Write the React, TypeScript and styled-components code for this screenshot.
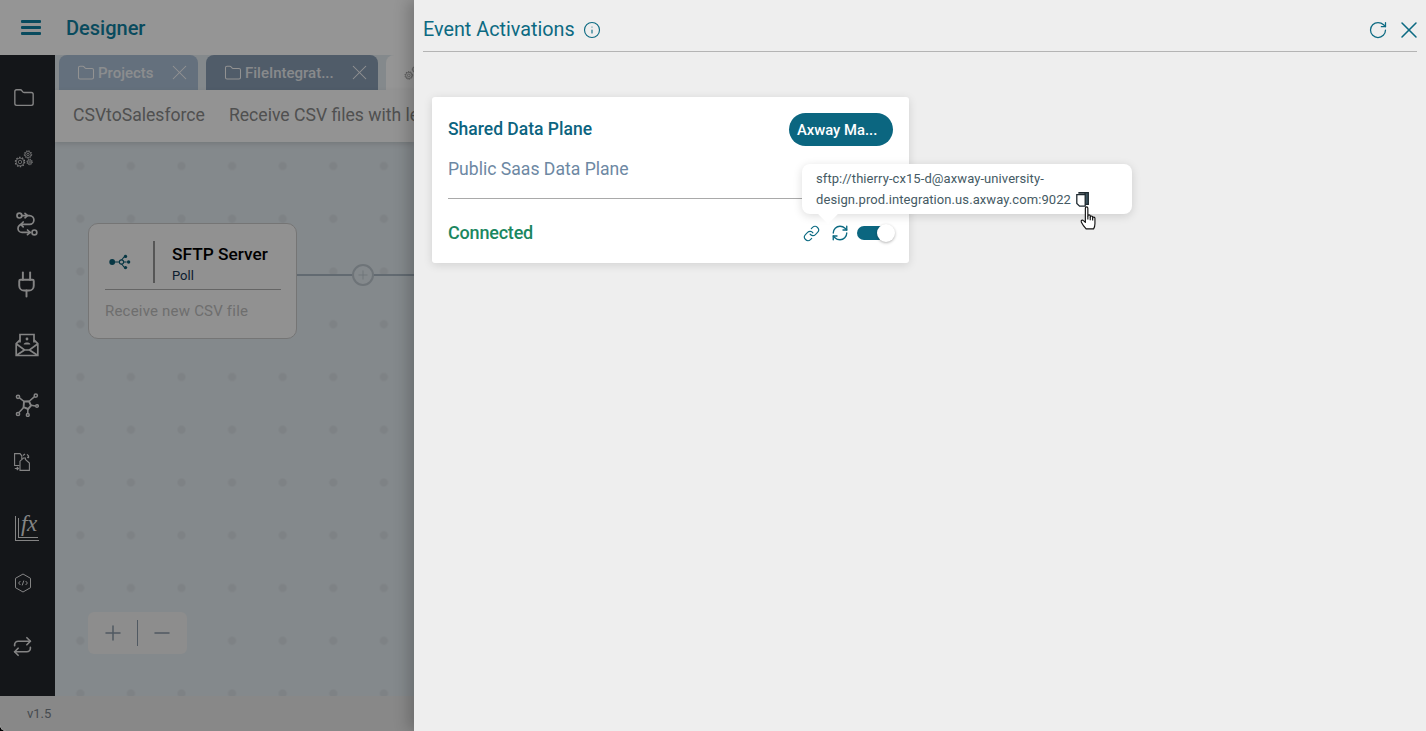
import React from "react";
import styled, { createGlobalStyle } from "styled-components";
import { Folder, Info, Link, Minus, Plug, Plus, RefreshCw, Repeat, RotateCw, X } from "lucide-react";

const Global = createGlobalStyle`
    html, body {
        margin: 0;
        height: 100%;
        overflow: hidden;
        background: #000;
    }
    body {
        font-family: Roboto, "Liberation Sans", sans-serif;
    }
    * {
        box-sizing: border-box;
    }
`;

const Shell = styled.div`
    display: flex;
    width: 1426px;
    height: 731px;
    overflow: hidden;
    border-bottom-left-radius: 6px;
`;

/* left: the designer, dimmed by the scrim */
const Designer = styled.div`
    position: relative;
    flex: 1;
    min-width: 0;
    display: flex;
    flex-direction: column;
    overflow: hidden;
    background: #f8f8f8;
`;
const Scrim = styled.div`
    position: absolute;
    inset: 0;
    background: rgba(0, 0, 0, 0.4);
    z-index: 5;
`;
const TopBar = styled.header`
    height: 55px;
    flex-shrink: 0;
    display: flex;
    align-items: center;
    padding-left: 21px;
    background: #f8f8f8;
`;
const Burger = styled.div`
    width: 20px;
    display: flex;
    flex-direction: column;
    gap: 3.5px;
    margin-right: 25px;
    span {
        height: 2.5px;
        background: #107d9d;
        border-radius: 1px;
    }
`;
const Brand = styled.div`
    font-size: 20px;
    font-weight: 500;
    color: #107d9d;
`;
const Middle = styled.div`
    flex: 1;
    min-height: 0;
    display: flex;
`;
const SideNav = styled.nav`
    width: 55px;
    flex-shrink: 0;
    background: #22252b;
    padding-top: 28px;
    color: #dddddd;
`;
const NavItem = styled.div<{ $gap: number; $left: number }>`
    height: 30px;
    margin-top: ${(p) => p.$gap}px;
    padding-left: ${(p) => p.$left}px;
    display: flex;
    align-items: center;
`;
const Work = styled.div`
    flex: 1;
    min-width: 0;
    display: flex;
    flex-direction: column;
    position: relative;
`;
const TabRow = styled.div`
    height: 35px;
    flex-shrink: 0;
    display: flex;
    gap: 8px;
    padding-left: 4px;
    background: #dce4e9;
`;
const Tab = styled.div<{ $w: number; $bg: string }>`
    width: ${(p) => p.$w}px;
    flex-shrink: 0;
    display: flex;
    align-items: center;
    padding: 0 6px 0 18px;
    border-radius: 8px 8px 0 0;
    background: ${(p) => p.$bg};
    color: #f4f4f4;
    font-size: 15px;
    font-weight: 500;
    white-space: nowrap;
    span {
        flex: 1;
        margin-left: 3px;
        opacity: 0.85;
    }
`;
const TabGear = styled.div`
    color: #777;
    line-height: 0;
`;
const SubBar = styled.div`
    height: 52px;
    flex-shrink: 0;
    display: flex;
    align-items: center;
    gap: 24px;
    padding: 0 0 2px 18px;
    background: #f6f6f6;
    color: #858585;
    font-size: 17.6px;
    white-space: nowrap;
    box-shadow: 0 2px 5px rgba(0, 0, 0, 0.12);
    position: relative;
    z-index: 1;
`;
const Canvas = styled.div`
    flex: 1;
    position: relative;
    background-color: #dce4e9;
    background-image: radial-gradient(circle, #d2d9de 3.2px, transparent 4.8px);
    background-size: 50.6px 52.75px;
    background-position: 0 -2.4px;
`;
const Node = styled.div`
    position: absolute;
    left: 33px;
    top: 81px;
    width: 209px;
    height: 116px;
    padding: 17px 15px 0 16px;
    background: #f2f2f2;
    border: 1px solid #c4c4c4;
    border-radius: 10px;
`;
const NodeHead = styled.div`
    display: flex;
    align-items: center;
    height: 49px;
    padding-bottom: 6px;
    border-bottom: 1px solid #a8a8a8;
`;
const NodeIcon = styled.div`
    width: 50px;
    padding-left: 4px;
    display: flex;
    align-items: center;
    height: 42px;
    border-right: 2px solid #8f8f8f;
`;
const NodeText = styled.div`
    margin-left: 17px;
    padding-top: 5px;
    display: flex;
    flex-direction: column;
`;
const NodeTitle = styled.div`
    font-size: 17.3px;
    font-weight: 500;
    line-height: 21px;
    color: #000;
`;
const NodeSub = styled.div`
    font-size: 13px;
    line-height: 21px;
    color: #16324f;
`;
const NodeNote = styled.div`
    margin-top: 12px;
    font-size: 15px;
    letter-spacing: 0.2px;
    color: #b8b8b8;
`;
const Wire = styled.div`
    position: absolute;
    left: 242px;
    top: 132px;
    width: 130px;
    height: 2px;
    background: #a3b1bd;
`;
const WireAdd = styled.div`
    position: absolute;
    left: 297px;
    top: 122px;
    width: 22px;
    height: 22px;
    border-radius: 50%;
    border: 2px solid #b7c1c9;
    background: #dce4e9;
    color: #b7c1c9;
    display: flex;
    align-items: center;
    justify-content: center;
`;
const Zoomer = styled.div`
    position: absolute;
    left: 33px;
    top: 470px;
    width: 99px;
    height: 42px;
    display: flex;
    align-items: center;
    justify-content: center;
    gap: 12px;
    border-radius: 6px;
    background: #ebebeb;
    color: #8594a3;
    i {
        width: 1px;
        height: 26px;
        background: #8594a3;
    }
`;
const Footer = styled.footer`
    height: 35px;
    flex-shrink: 0;
    padding: 10px 0 0 27px;
    font-size: 13px;
    line-height: 16px;
    color: #757d85;
    background: #e3e3e3;
`;

/* right: the drawer */
const Drawer = styled.aside`
    width: 1012px;
    flex-shrink: 0;
    position: relative;
    z-index: 10;
    background: #eeeeee;
    box-shadow: -6px 0 14px rgba(0, 0, 0, 0.2);
    padding: 0 9px;
`;
const DrawerHead = styled.div`
    height: 52px;
    display: flex;
    align-items: center;
    padding-top: 9px;
    border-bottom: 1px solid #b4b4b4;
    color: #0c6a82;
`;
const DrawerTitle = styled.h1`
    margin: 0 8px 0 0;
    font-size: 19.8px;
    font-weight: 400;
    line-height: 24px;
`;
const HeadActions = styled.div`
    margin-left: auto;
    margin-right: -6px;
    display: flex;
    align-items: center;
    gap: 7px;
    color: #0c6a82;
`;
const Card = styled.section`
    position: relative;
    width: 477px;
    height: 166px;
    margin: 45px 0 0 9px;
    padding: 16px;
    background: #fff;
    border-radius: 3px;
    box-shadow: 0 2px 10px rgba(0, 0, 0, 0.12);
`;
const CardTop = styled.div`
    display: flex;
    align-items: center;
    justify-content: space-between;
    height: 33px;
`;
const CardTitle = styled.div`
    font-size: 17.5px;
    font-weight: 500;
    line-height: 33px;
    color: #0c6480;
`;
const Pill = styled.div`
    width: 104px;
    height: 33px;
    display: flex;
    align-items: center;
    padding-left: 8px;
    border-radius: 17px;
    background: #0b6680;
    color: #fff;
    font-size: 14.8px;
    font-weight: 500;
`;
const CardSub = styled.div`
    margin-top: 12px;
    height: 41px;
    font-size: 17.6px;
    line-height: 22px;
    color: #6d88a3;
    border-bottom: 1px solid #a9a9a9;
`;
const CardFoot = styled.div`
    display: flex;
    align-items: center;
    margin-top: 16px;
    height: 36px;
`;
const Status = styled.div`
    flex: 1;
    padding-bottom: 2px;
    font-size: 18px;
    font-weight: 500;
    letter-spacing: -0.2px;
    color: #1b8760;
`;
const FootIcons = styled.div`
    display: flex;
    align-items: center;
    gap: 11px;
    color: #0c6a82;
`;
const Toggle = styled.div`
    position: relative;
    width: 34px;
    height: 14px;
    margin-left: -3px;
    margin-right: 2px;
    border-radius: 7px;
    background: #0b6680;
    &::after {
        content: "";
        position: absolute;
        right: -4px;
        top: -2px;
        width: 18px;
        height: 18px;
        border-radius: 50%;
        background: #fff;
        box-shadow: 0 1px 3px rgba(0, 0, 0, 0.3);
    }
`;
const Tip = styled.div`
    position: absolute;
    left: 370px;
    top: 67px;
    width: 330px;
    height: 50px;
    padding: 5px 14px;
    border-radius: 8px;
    background: #fff;
    box-shadow: 0 2px 10px rgba(0, 0, 0, 0.14);
    font-size: 13px;
    line-height: 20.5px;
    letter-spacing: 0.08px;
    color: #455a64;
    &::after {
        content: "";
        position: absolute;
        left: 19px;
        bottom: -7px;
        width: 14px;
        height: 14px;
        background: #fff;
        transform: rotate(45deg);
    }
`;
const TipCopy = styled.span`
    display: inline-block;
    margin-left: 5px;
    vertical-align: -3px;
    line-height: 0;
`;
const HandCursor = styled.div`
    position: absolute;
    left: 278px;
    top: 42px;
    z-index: 2;
    line-height: 0;
`;

const Gears = ({ size = 20 }: { size?: number }) => (
    <svg width={size} height={size} viewBox="0 0 20 20" fill="none" stroke="currentColor" strokeWidth="0.7">
        <circle cx="6" cy="13" r="1.7" />
        <circle cx="6" cy="13" r="3.9" />
        <circle cx="6" cy="13" r="4.7" strokeWidth="1.1" strokeDasharray="1.5 1.45" />
        <circle cx="14" cy="5.5" r="1.2" />
        <circle cx="14" cy="5.5" r="3" />
        <circle cx="14" cy="5.5" r="3.7" strokeWidth="1" strokeDasharray="1.3 1.2" />
        <circle cx="15.6" cy="13" r="0.9" />
        <circle cx="15.6" cy="13" r="2.2" />
        <circle cx="15.6" cy="13" r="2.8" strokeWidth="0.8" strokeDasharray="1.1 1.1" />
    </svg>
);
const Routes = () => (
    <svg width="22" height="24" viewBox="0 0 22 24" fill="none" stroke="currentColor" strokeWidth="1.7" strokeLinecap="round">
        <circle cx="3.4" cy="3.6" r="2.4" />
        <path d="M6 3.6h7.5a4.4 4.4 0 0 1 0 8.8H6a4 4 0 0 0 0 8h8" />
        <path d="M9 1.4l2.4 2.2L9 5.8M7.2 10l-2.4 2.4 2.4 2.4M11.5 18l2.6 2.4-2.6 2.2" />
        <circle cx="18.4" cy="20.4" r="2.4" />
    </svg>
);
const MailCard = () => (
    <svg width="24" height="24" viewBox="0 0 24 24" fill="none" stroke="currentColor" strokeWidth="1.7">
        <path d="M5 9.5V1.5h14v8" />
        <path d="M5 7L1.2 10.5V22.5h21.6V10.5L19 7" />
        <path d="M1.5 11l8 6h5l8-6M2 22l7.5-5M22 22l-7.5-5" />
        <circle cx="12" cy="6" r="1.4" fill="currentColor" stroke="none" />
        <path d="M8.6 11.5c.4-2.6 6.4-2.6 6.8 0z" fill="currentColor" stroke="none" />
    </svg>
);
const Hub = () => (
    <svg width="24" height="24" viewBox="0 0 24 24" fill="none" stroke="currentColor" strokeWidth="1.5">
        <path d="M9 8.5l5-.2 2 4.2-3 3.5-4.4-1.8z" strokeWidth="1.9" />
        <path d="M9 8.5L4.5 4.8M14.5 8l5-4.4M16 12.3l4.6.6M12.8 16v4.5M8.6 14.5l-4.6 5" />
        <circle cx="3" cy="3.8" r="1.6" />
        <circle cx="20.8" cy="2.6" r="1.6" />
        <circle cx="22" cy="13" r="1.3" />
        <circle cx="12.8" cy="22" r="1.4" />
        <circle cx="3" cy="21" r="1.6" />
    </svg>
);
const SwapFiles = () => (
    <svg width="16" height="18" viewBox="0 0 16 18" fill="none" stroke="currentColor" strokeWidth="1.1">
        <path d="M5.5 12.5H.6V.6H6l1.8 2.2V6" />
        <path d="M6 17.4V8.2L9.4 5l2 0v1.4L15.4 10v7.4z" />
        <path d="M9 2.5l2-1.5M13 1.4l1.6 1.6v2M14.6 5l-1.4-1" />
        <path d="M.8 15.5h3.4M2.8 14l1.6 1.5-1.6 1.5" />
    </svg>
);
const FxChart = styled.div`
    position: relative;
    width: 24px;
    height: 25px;
    border-left: 1px solid currentColor;
    border-bottom: 1px solid currentColor;
    &::before {
        content: "";
        position: absolute;
        left: 2px;
        top: 2px;
        right: 1px;
        bottom: 2px;
        border-left: 1px solid currentColor;
        border-bottom: 1px solid currentColor;
    }
    span {
        position: absolute;
        left: 5px;
        top: -5px;
        font-family: "Liberation Serif", serif;
        font-style: italic;
        font-weight: 400;
        font-size: 23px;
        line-height: 26px;
        letter-spacing: -0.5px;
    }
`;
const HexCode = () => (
    <svg width="18" height="20" viewBox="0 0 18 20" fill="none" stroke="currentColor" strokeWidth="1">
        <path d="M9 1l7.5 4.3v9.4L9 19l-7.5-4.3V5.3z" />
        <path d="M6.4 8L4.6 10l1.8 2M11.6 8l1.8 2-1.8 2M9.8 7.6L8.2 12.4" />
    </svg>
);
const ShareDots = () => (
    <svg width="22" height="16" viewBox="0 0 22 16" fill="#0b5a70" stroke="#0b5a70">
        <circle cx="3.2" cy="8" r="2.9" stroke="none" />
        <path d="M6 8h5l4-5M11 8l4 5" fill="none" strokeWidth="1.1" />
        <circle cx="12.5" cy="8" r="2.1" fill="#f2f2f2" strokeWidth="1.1" />
        <circle cx="16.5" cy="2.4" r="1.7" stroke="none" />
        <circle cx="19.6" cy="8" r="1.7" stroke="none" />
        <circle cx="16.5" cy="13.6" r="1.7" stroke="none" />
        <path d="M14.6 8h3" fill="none" strokeWidth="1.1" />
    </svg>
);
const CopyDoc = () => (
    <svg width="13" height="15" viewBox="0 0 13 15" fill="#3d5560" stroke="#1f2a30" strokeWidth="1.3">
        <path d="M3 1V.7h9.3v11.6H9V1z" />
        <path d="M.8 2.6h8.4v11.6H3.6L.8 11.4z" fill="#fff" />
    </svg>
);
const Hand = () => (
    <svg width="18" height="25" viewBox="0 0 17 24" fill="#fff" stroke="#111" strokeWidth="1.1" strokeLinejoin="round">
        <path d="M5 2.2C5 .4 7.4.4 7.4 2.2V9.6c0-1.4 2.3-1.4 2.3 0v1c0-1.3 2.3-1.3 2.3 0v1c0-1.2 2.2-1.2 2.2.2v5.2c0 2.2-.3 3.2-1.3 5H5.7C4.6 20.7 3 19 1.2 15.5c-.8-1.5.9-2.7 2-1.5L5 15.8z" />
        <path d="M7.4 9.6v3.4M9.7 10.6v3M12 11.6v2.4" fill="none" />
    </svg>
);

const NAV = [
    { id: 1, gap: 0, left: 13, icon: <Folder size={22} strokeWidth={1.5} /> },
    { id: 2, gap: 31, left: 14, icon: <Gears /> },
    { id: 3, gap: 35, left: 16, icon: <Routes /> },
    { id: 4, gap: 30, left: 12, icon: <Plug size={29} strokeWidth={1.6} /> },
    { id: 5, gap: 31, left: 15, icon: <MailCard /> },
    { id: 6, gap: 30, left: 15, icon: <Hub /> },
    { id: 7, gap: 27, left: 14, icon: <SwapFiles /> },
    {
        id: 8,
        gap: 36,
        left: 15,
        icon: (
            <FxChart>
                <span>fx</span>
            </FxChart>
        ),
    },
    { id: 9, gap: 25, left: 14, icon: <HexCode /> },
    { id: 10, gap: 33, left: 12, icon: <Repeat size={21} strokeWidth={1.9} /> },
];

export default function App() {
    return (
        <Shell>
            <Global />
            <Designer>
                <TopBar>
                    <Burger>
                        <span />
                        <span />
                        <span />
                    </Burger>
                    <Brand>Designer</Brand>
                </TopBar>
                <Middle>
                    <SideNav>
                        {NAV.map((n) => (
                            <NavItem key={n.id} $gap={n.gap} $left={n.left}>
                                {n.icon}
                            </NavItem>
                        ))}
                    </SideNav>
                    <Work>
                        <TabRow>
                            <Tab $w={139} $bg="#a7bbd0">
                                <Folder size={18} strokeWidth={1.4} />
                                <span>Projects</span>
                                <X size={25} strokeWidth={1} />
                            </Tab>
                            <Tab $w={172} $bg="#8599af">
                                <Folder size={18} strokeWidth={1.4} />
                                <span>FileIntegrat...</span>
                                <X size={25} strokeWidth={1} />
                            </Tab>
                            <Tab $w={160} $bg="#f8f8f8">
                                <TabGear>
                                    <Gears size={16} />
                                </TabGear>
                            </Tab>
                        </TabRow>
                        <SubBar>
                            <span>CSVtoSalesforce</span>
                            <span>Receive CSV files with lead data</span>
                        </SubBar>
                        <Canvas>
                            <Wire />
                            <WireAdd>
                                <Plus size={14} strokeWidth={1.5} />
                            </WireAdd>
                            <Node>
                                <NodeHead>
                                    <NodeIcon>
                                        <ShareDots />
                                    </NodeIcon>
                                    <NodeText>
                                        <NodeTitle>SFTP Server</NodeTitle>
                                        <NodeSub>Poll</NodeSub>
                                    </NodeText>
                                </NodeHead>
                                <NodeNote>Receive new CSV file</NodeNote>
                            </Node>
                            <Zoomer>
                                <Plus size={24} strokeWidth={1.5} />
                                <i />
                                <Minus size={24} strokeWidth={1.5} />
                            </Zoomer>
                        </Canvas>
                    </Work>
                </Middle>
                <Footer>v1.5</Footer>
                <Scrim />
            </Designer>
            <Drawer>
                <DrawerHead>
                    <DrawerTitle>Event Activations</DrawerTitle>
                    <Info size={18} strokeWidth={1.5} />
                    <HeadActions>
                        <RotateCw size={20} strokeWidth={1.5} />
                        <X size={28} strokeWidth={1.3} />
                    </HeadActions>
                </DrawerHead>
                <Card>
                    <CardTop>
                        <CardTitle>Shared Data Plane</CardTitle>
                        <Pill>Axway Ma...</Pill>
                    </CardTop>
                    <CardSub>Public Saas Data Plane</CardSub>
                    <CardFoot>
                        <Status>Connected</Status>
                        <FootIcons>
                            <Link size={17} strokeWidth={1.6} />
                            <RefreshCw size={18} strokeWidth={1.8} />
                            <Toggle />
                        </FootIcons>
                    </CardFoot>
                    <Tip>
                        sftp://thierry-cx15-d@axway-university-
                        <br />
                        design.prod.integration.us.axway.com:9022
                        <TipCopy>
                            <CopyDoc />
                        </TipCopy>
                        <HandCursor>
                            <Hand />
                        </HandCursor>
                    </Tip>
                </Card>
            </Drawer>
        </Shell>
    );
}
